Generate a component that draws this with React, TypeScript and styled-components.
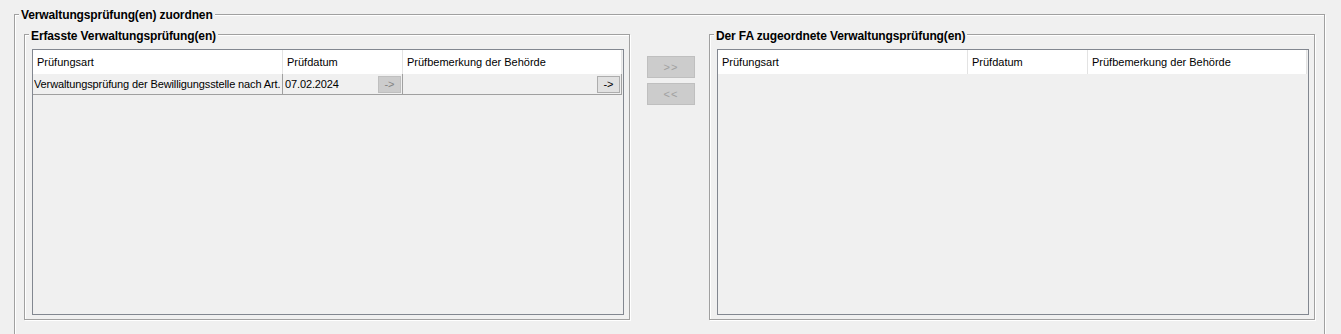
import React from "react";
import styled, { createGlobalStyle } from "styled-components";

const GlobalStyle = createGlobalStyle`
  body {
    margin: 0;
    background: #f0f0f0;
    font-family: "Liberation Sans", Arial, sans-serif;
    overflow: hidden;
  }
`;

interface Column {
  title: string;
  width: string;
}

const columns: Column[] = [
  { title: "Prüfungsart", width: "250px" },
  { title: "Prüfdatum", width: "120px" },
  { title: "Prüfbemerkung der Behörde", width: "1fr" },
];

const gridTemplate = columns.map((c) => c.width).join(" ");

export default function App() {
  return (
    <Page>
      <GlobalStyle />
      <OuterGroup>
        <GroupTitle $top={-7}>Verwaltungsprüfung(en) zuordnen</GroupTitle>

        <Panel>
          <GroupTitle $top={-6}>Erfasste Verwaltungsprüfung(en)</GroupTitle>
          <Table>
            <HeaderRow>
              {columns.map((c) => (
                <HeaderCell key={c.title}>{c.title}</HeaderCell>
              ))}
            </HeaderRow>
            <DataRow>
              <DataCell $padLeft={1}>
                <CellText>
                  Verwaltungsprüfung der Bewilligungsstelle nach Art.
                </CellText>
              </DataCell>
              <DataCell $padLeft={2}>
                <CellText>07.02.2024</CellText>
                <CellButton disabled>-&gt;</CellButton>
              </DataCell>
              <DataCell $padLeft={2}>
                <CellText />
                <CellButton>-&gt;</CellButton>
              </DataCell>
            </DataRow>
          </Table>
        </Panel>

        <MoveColumn>
          <MoveButton disabled>&gt;&gt;</MoveButton>
          <MoveButton disabled>&lt;&lt;</MoveButton>
        </MoveColumn>

        <Panel>
          <GroupTitle $top={-6}>
            Der FA zugeordnete Verwaltungsprüfung(en)
          </GroupTitle>
          <Table>
            <HeaderRow>
              {columns.map((c) => (
                <HeaderCell key={c.title}>{c.title}</HeaderCell>
              ))}
            </HeaderRow>
          </Table>
        </Panel>
      </OuterGroup>
    </Page>
  );
}

const Page = styled.div`
  box-sizing: border-box;
  height: 100vh;
  overflow: hidden;
  padding: 14px 0 0 14px;
`;

// etched border like the swing/windows titled border
const GroupBox = styled.div`
  position: relative;
  box-sizing: border-box;
  border: 1px solid #a0a0a0;
  box-shadow: inset 1px 1px 0 #fff, 1px 1px 0 #fff;
`;

const OuterGroup = styled(GroupBox)`
  width: 1311px;
  height: 340px;
  padding: 19px 9px 0 9px;
  display: flex;
  align-items: flex-start;
`;

const Panel = styled(GroupBox)`
  width: 606px;
  height: 286px;
  padding: 14px 5px 4px 7px;
  flex: none;
`;

const GroupTitle = styled.span<{ $top: number }>`
  position: absolute;
  top: ${(p) => p.$top}px;
  left: 4px;
  padding: 0 2px;
  background: #f0f0f0;
  color: #000;
  font-size: 12px;
  font-weight: bold;
  line-height: 14px;
  letter-spacing: -0.12px;
  white-space: nowrap;
`;

const Table = styled.div`
  box-sizing: border-box;
  height: 100%;
  border: 1px solid #828790;
  background: #f0f0f0;
  display: flex;
  flex-direction: column;
`;

const HeaderRow = styled.div`
  display: grid;
  grid-template-columns: ${gridTemplate};
  height: 24px;
  margin-right: 1px;
  background: #fff;
`;

const HeaderCell = styled.div`
  padding-left: 4px;
  border-right: 1px solid #e3e3e3;
  font-size: 11px;
  line-height: 24px;
  color: #000;
  white-space: nowrap;
  overflow: hidden;
`;

const DataRow = styled.div`
  display: grid;
  grid-template-columns: ${gridTemplate};
  height: 21px;
  box-sizing: border-box;
  margin-right: 1px;
  border-bottom: 1px solid #a0a0a0;
`;

const DataCell = styled.div<{ $padLeft: number }>`
  display: flex;
  align-items: center;
  justify-content: space-between;
  min-width: 0;
  overflow: hidden;
  padding: 0 1px 0 ${(p) => p.$padLeft}px;
  border-right: 1px solid #a0a0a0;
`;

const CellText = styled.span`
  font-size: 11px;
  letter-spacing: -0.12px;
  color: #000;
  white-space: nowrap;
  overflow: hidden;
`;

const CellButton = styled.button`
  flex: none;
  width: 23px;
  height: 17px;
  padding: 0;
  box-sizing: border-box;
  font-family: inherit;
  font-size: 11px;
  line-height: 15px;
  color: #000;
  background: #e1e1e1;
  border: 1px solid #adadad;

  &:disabled {
    color: #838383;
    background: #cccccc;
    border-color: #bfbfbf;
  }
`;

const MoveColumn = styled.div`
  width: 79px;
  flex: none;
  box-sizing: border-box;
  padding: 22px 0 0 17px;
  display: flex;
  flex-direction: column;
  gap: 5px;
`;

const MoveButton = styled.button`
  width: 48px;
  height: 22px;
  padding: 0;
  box-sizing: border-box;
  font-family: inherit;
  font-size: 11px;
  letter-spacing: 1px;
  color: #000;
  background: #e1e1e1;
  border: 1px solid #adadad;

  &:disabled {
    color: #a0a0a0;
    background: #cccccc;
    border-color: #bfbfbf;
  }
`;
